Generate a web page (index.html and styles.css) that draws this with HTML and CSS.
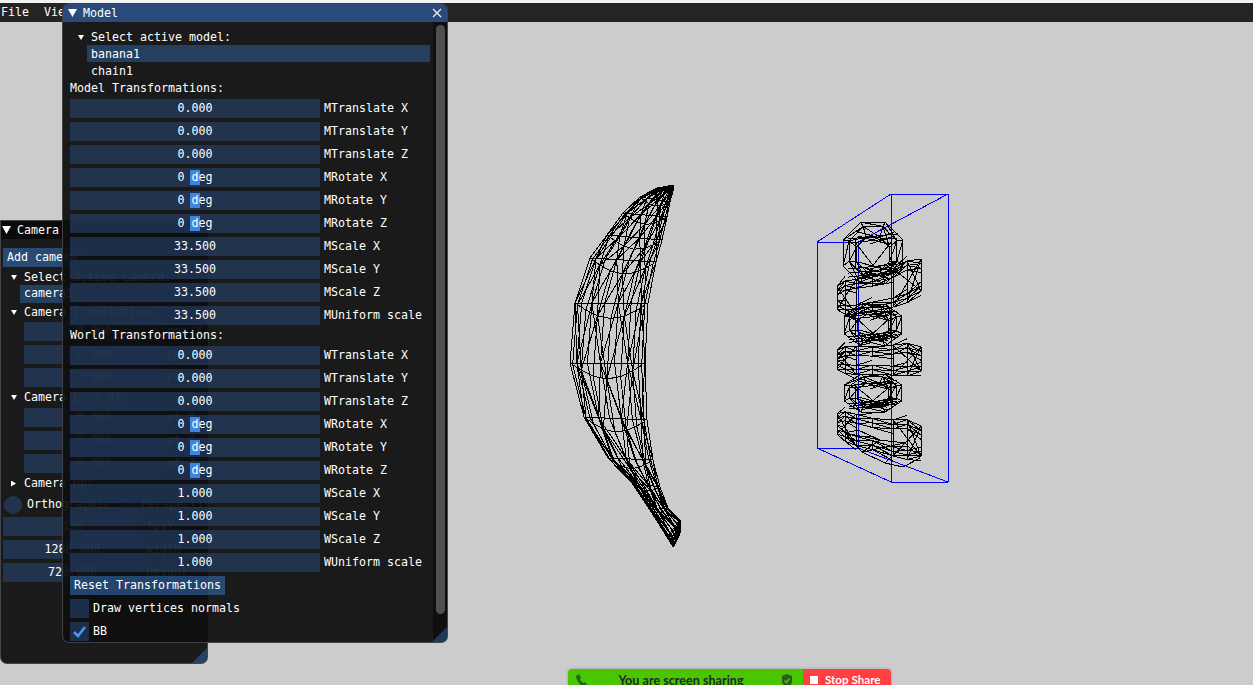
FILE: index.html
```html
<!DOCTYPE html>
<html lang="en">
<head>
<meta charset="utf-8">
<title>Mesh Viewer</title>
<link rel="stylesheet" href="styles.css">
</head>
<body>
<div class="top-strip"></div>
<nav class="menubar"><span>File</span><span>View</span></nav>

<svg class="canvas" viewBox="0 0 1253 685" width="1253" height="685" aria-hidden="true">
  <path class="bbox" d="M817 242L891 194H948L858 242H817V448L891 482H948L858 448H817M858 242V448M891 194V482M948 194V482"/>
  <path id="mesh-banana" class="mesh"/>
  <path id="mesh-chain" class="mesh"/>
</svg>

<section class="window camera">
  <header class="titlebar inactive"><i class="tri big"></i><span>Camera</span></header>
  <div class="content cam-content">
    <div class="button add">Add camera</div>
    <div class="tree tree-tight"><i class="tri"></i><span>Select active camera:</span></div>
    <div class="selected cam-sel">camera1</div>
    <div class="tree tree-mid"><i class="tri"></i><span>Camera Translation:</span></div>
    <div class="row indent"><div class="slider"><span>0.000</span></div><label>pos X</label></div>
    <div class="row indent"><div class="slider"><span>0.000</span></div><label>pos Y</label></div>
    <div class="row indent"><div class="slider"><span>2.500</span></div><label>pos Z</label></div>
    <div class="tree"><i class="tri"></i><span>Camera Look At:</span></div>
    <div class="row indent"><div class="slider"><span>0.000</span></div><label>at X</label></div>
    <div class="row indent"><div class="slider"><span>0.000</span></div><label>at Y</label></div>
    <div class="row indent"><div class="slider"><span>0.000</span></div><label>at Z</label></div>
    <div class="tree"><i class="tri right"></i><span>Camera Up:</span></div>
    <div class="radios">
      <i class="radio"></i><span class="radio-label">Orthographic</span>
      <i class="radio second"></i><span class="radio-label">Perspective</span>
    </div>
    <div class="row wide"><div class="slider"><span>136</span></div><label>fovY</label></div>
    <div class="row wide"><div class="slider"><span>1280.000</span></div><label>width</label></div>
    <div class="row wide"><div class="slider"><span>720.000</span></div><label>height</label></div>
  </div>
  <div class="grip"></div>
</section>

<section class="window model">
  <header class="titlebar"><i class="tri big"></i><span>Model</span>
    <svg class="close" viewBox="0 0 10 10" width="10" height="10" aria-hidden="true"><path d="M1 1L9 9M9 1L1 9"/></svg>
  </header>
  <div class="body">
    <div class="content model-content">
      <div class="list">
        <div class="tree"><i class="tri"></i><span>Select active model:</span></div>
        <div class="selected">banana1</div>
        <div class="item">chain1</div>
      </div>
      <div class="text">Model Transformations:</div>
      <div class="row"><div class="slider"><span>0.000</span></div><label>MTranslate X</label></div>
      <div class="row"><div class="slider"><span>0.000</span></div><label>MTranslate Y</label></div>
      <div class="row"><div class="slider"><span>0.000</span></div><label>MTranslate Z</label></div>
      <div class="row"><div class="slider"><b class="grab"></b><span>0 deg</span></div><label>MRotate X</label></div>
      <div class="row"><div class="slider"><b class="grab"></b><span>0 deg</span></div><label>MRotate Y</label></div>
      <div class="row"><div class="slider"><b class="grab"></b><span>0 deg</span></div><label>MRotate Z</label></div>
      <div class="row"><div class="slider"><span>33.500</span></div><label>MScale X</label></div>
      <div class="row"><div class="slider"><span>33.500</span></div><label>MScale Y</label></div>
      <div class="row"><div class="slider"><span>33.500</span></div><label>MScale Z</label></div>
      <div class="row"><div class="slider"><span>33.500</span></div><label>MUniform scale</label></div>
      <div class="text">World Transformations:</div>
      <div class="row"><div class="slider"><span>0.000</span></div><label>WTranslate X</label></div>
      <div class="row"><div class="slider"><span>0.000</span></div><label>WTranslate Y</label></div>
      <div class="row"><div class="slider"><span>0.000</span></div><label>WTranslate Z</label></div>
      <div class="row"><div class="slider"><b class="grab"></b><span>0 deg</span></div><label>WRotate X</label></div>
      <div class="row"><div class="slider"><b class="grab"></b><span>0 deg</span></div><label>WRotate Y</label></div>
      <div class="row"><div class="slider"><b class="grab"></b><span>0 deg</span></div><label>WRotate Z</label></div>
      <div class="row"><div class="slider"><span>1.000</span></div><label>WScale X</label></div>
      <div class="row"><div class="slider"><span>1.000</span></div><label>WScale Y</label></div>
      <div class="row"><div class="slider"><span>1.000</span></div><label>WScale Z</label></div>
      <div class="row"><div class="slider"><span>1.000</span></div><label>WUniform scale</label></div>
      <div class="button reset">Reset Transformations</div>
      <div class="check"><i class="box"></i><span>Draw vertices normals</span></div>
      <div class="check"><i class="box"><svg viewBox="0 0 19 19" width="19" height="19" aria-hidden="true"><path d="M4 10L8 14L15 5"/></svg></i><span>BB</span></div>
    </div>
    <div class="scrollbar"><div class="scroll-grab"></div></div>
  </div>
  <div class="grip"></div>
</section>

<aside class="share">
  <div class="share-status">
    <svg class="share-phone" viewBox="0 0 12 12" width="12" height="12" aria-hidden="true"><path d="M1 2L4 0L6 4L5 5.500C6 7 7 8 8.500 9L10 8L13 12H7C4 10 1.500 6 1 2Z"/></svg>
    <span>You are screen sharing</span>
    <svg class="share-shield" viewBox="0 0 12 14" width="12" height="14" aria-hidden="true"><path class="sh" d="M6 0L11 2V7C11 10 9 12 6 14C3 12 1 10 1 7V2Z"/><path class="tick" d="M3.500 6.500L5.500 8.500L8.500 4.500"/></svg>
  </div>
  <div class="share-stop"><i class="stop-square"></i><span>Stop Share</span></div>
</aside>
<script src="script.js"></script>
</body>
</html>
```
FILE: styles.css
```css
* { box-sizing: border-box; }

html, body {
  margin: 0;
  width: 1253px;
  height: 685px;
  overflow: hidden;
}

body {
  position: relative;
  background: #ccc;
  color: #fff;
  font: 11.63px/13px "DejaVu Sans Mono", "Liberation Mono", monospace;
  white-space: nowrap;
}

.top-strip { height: 3px; background: #f2f2f2; }

.menubar {
  display: flex;
  gap: 15px;
  height: 19px;
  padding: 3px 1px;
  background: #242424;
}

.canvas { position: absolute; left: 0; top: 0; }
.mesh { fill: none; stroke: #000; stroke-width: 1; shape-rendering: crispEdges; }
.bbox { fill: none; stroke: #00f; stroke-width: 1; shape-rendering: crispEdges; }

.window {
  position: absolute;
  overflow: hidden;
  display: flex;
  flex-direction: column;
  background: rgba(15, 15, 15, .94);
  border: 1px solid rgba(110, 110, 128, .5);
  border-radius: 7px;
}

.model { left: 62px; top: 3px; width: 386px; height: 640px; }
.camera { left: 0; top: 220px; width: 208px; height: 444px; border-top-left-radius: 0; }

.titlebar {
  flex: none;
  display: flex;
  align-items: center;
  height: 18px;
  padding-left: 5px;
  background: #294a7a;
}
.titlebar.inactive { background: #0a0a0a; padding-left: 1px; }
.titlebar > span { margin-left: 6px; }

.close { margin-left: auto; margin-right: 5px; }
.close path { fill: none; stroke: #eee; stroke-width: 1.3; }

.tri {
  flex: none;
  width: 6px;
  height: 5px;
  background: #fff;
  clip-path: polygon(0 0, 100% 0, 50% 100%);
}
.tri.big { width: 9px; height: 8px; }
.tri.right { width: 5px; height: 6px; clip-path: polygon(0 0, 100% 50%, 0 100%); }

.body { flex: 1; display: flex; min-height: 0; }

.content { display: flex; flex-direction: column; min-width: 0; }

.model-content {
  flex: 1;
  gap: 4px;
  padding: 9px 3px 0 7px;
}

.list {
  display: flex;
  flex-direction: column;
  margin-bottom: -2px;
  padding-left: 17px;
}
.list .tree { margin: 0 0 1px -9px; gap: 7px; }
.selected {
  height: 17px;
  padding: 3px 4px 1px;
  background: rgba(66, 150, 250, .31);
}
.item { height: 17px; margin-top: 1px; padding: 2px 4px; }

.tree { display: flex; align-items: center; height: 13px; flex: none; }
.text { height: 13px; flex: none; }

.row { display: flex; gap: 4px; height: 19px; flex: none; align-items: center; }

.slider {
  position: relative;
  display: flex;
  align-items: center;
  justify-content: center;
  width: 250px;
  height: 19px;
  background: rgba(41, 74, 122, .54);
}
.slider span { position: relative; }

.grab {
  position: absolute;
  left: 120px;
  top: 2px;
  width: 10px;
  height: 15px;
  background: #3d85e0;
}

.button {
  flex: none;
  height: 19px;
  padding: 3px 4px;
  background: rgba(66, 150, 250, .4);
  align-self: flex-start;
}

.check { display: flex; align-items: center; gap: 4px; height: 19px; flex: none; }
.box { display: block; width: 19px; height: 19px; background: rgba(41, 74, 122, .54); }
.box svg { display: block; }
.box path { fill: none; stroke: #4296fa; stroke-width: 2.6; }

.scrollbar {
  flex: none;
  width: 14px;
  padding: 3px 2px 28px 3px;
  background: rgba(5, 5, 5, .53);
}
.scroll-grab { height: 100%; background: #4f4f4f; border-radius: 5px; }

.grip {
  position: absolute;
  right: 0;
  bottom: 0;
  width: 15px;
  height: 15px;
  background: rgba(66, 150, 250, .32);
  clip-path: polygon(100% 0, 100% 100%, 0 100%);
}

.cam-content { flex: 1; padding: 9px 3px 0 2px; overflow: hidden; }
.cam-content .add { margin-bottom: 4px; }
.cam-content .tree { margin-left: 8px; gap: 7px; margin-bottom: 4px; }
.cam-content .tree-tight { margin-bottom: 1px; }
.cam-content .tree-mid { margin-bottom: 3px; }
.cam-content .tree .tri.right { margin-right: 1px; }
.cam-sel { height: 18px; margin-left: 17px; padding: 2px 4px; flex: none; margin-bottom: 3px; }

.indent { margin-left: 21px; margin-bottom: 4px; }
.indent .slider { width: 140px; }
.indent label { margin-left: -1px; }

.wide { margin-bottom: 4px; }
.wide .slider { width: 139px; }

.radios { display: flex; align-items: center; height: 19px; flex: none; margin: 1px 0 3px 1px; }
.radio { flex: none; width: 18px; height: 18px; border-radius: 50%; background: rgba(41, 74, 122, .54); }
.radio.second { margin-left: 7px; }
.radio-label { margin-left: 5px; }

.share {
  position: absolute;
  left: 568px;
  top: 669px;
  display: flex;
  width: 323px;
  height: 20px;
  border-radius: 4px 4px 0 0;
  overflow: hidden;
  box-shadow: 0 0 3px rgba(0, 0, 0, .25);
  font: 700 11.6px/20px Lato, "Open Sans", sans-serif;
}
.share-status {
  position: relative;
  display: flex;
  justify-content: center;
  width: 235px;
  padding: 2px 9px 0 0;
  background: #4ac600;
  color: #23263a;
  font-size: 12.6px;
}
.share-stop {
  display: flex;
  align-items: flex-start;
  gap: 7px;
  flex: 1;
  padding: 1px 0 0 7px;
  background: #ff4040;
}
.stop-square { width: 8px; height: 8px; margin-top: 6px; background: #fff; }

.share-phone { position: absolute; left: 7px; top: 5px; }
.share-phone path { fill: #1f6a12; }
.share-shield { position: absolute; right: 10px; top: 5px; }
.sh { fill: #2c5c22; }
.tick { fill: none; stroke: #4ac600; stroke-width: 1.5; }
```
FILE: script.js
```js
function seg(a, b) {
  return "M" + a[0].toFixed(1) + " " + a[1].toFixed(1) + "L" + b[0].toFixed(1) + " " + b[1].toFixed(1);
}
function loop(pts) {
  var d = "";
  for (var i = 0; i < pts.length; i++) d += seg(pts[i], pts[(i + 1) % pts.length]);
  return d;
}
function lerp(a, b, t) { return a + (b - a) * t; }

function banana() {
  var S = [
    [674,185,674,185],[657,188,673,191],[640,197,670,202],[623,213,667,217],
    [607,235,662,240],[590,258,656,262],[575,303,648,303],[570,363,645,363],
    [584,417,647,420],[608,458,653,460],[632,483,660,487],[650,510,668,508],
    [667,537,680,520],[673,547,680,533]
  ];
  var n = 7, d = "";
  function pt(j, i, side) {
    var u = (i + (side ? 0.45 : 0)) / n;
    var t = 0.45 * u + 0.55 * (0.5 - 0.5 * Math.cos(Math.PI * u));
    var s = S[j], w = (s[2] - s[0]) / 75;
    return [lerp(s[0], s[2], t), lerp(s[1], s[3], t) + (side ? 16 * w * Math.sin(Math.PI * t) : 0)];
  }
  [0, 1].forEach(function (side) {
    var lim = side ? n - 1 : n;
    for (var j = 0; j < S.length; j++) {
      for (var i = 0; i < lim; i++) {
        d += seg(pt(j, i, side), pt(j, i + 1, side));
        if (j + 1 < S.length) {
          d += seg(pt(j, i, side), pt(j + 1, i, side));
          d += (i + j) % 2
            ? seg(pt(j, i + 1, side), pt(j + 1, i, side))
            : seg(pt(j, i, side), pt(j + 1, i + 1, side));
        }
      }
      if (j + 1 < S.length) d += seg(pt(j, lim, side), pt(j + 1, lim, side));
    }
  });
  return d;
}

// A link seen side on: a block at each end, joined by two dense bands.
function wideLink(yl, yr, hl, hr, sag) {
  var xs = [837, 845, 856, 872, 893, 907, 921];
  var prof = [0.72, 1, 1, 0.92, 0.96, 1, 0.72];
  var d = "";
  function cy(k) { return lerp(yl, yr, (xs[k] - 837) / 84) + sag * Math.sin(Math.PI * (xs[k] - 837) / 84); }
  function hh(k) { return lerp(hl, hr, (xs[k] - 837) / 84) * prof[k]; }
  function p(k, off) { return [xs[k], cy(k) + off]; }
  for (var k = 0; k < xs.length; k++) {
    var h = hh(k);
    if (k + 1 < xs.length) {
      var g = hh(k + 1);
      [[-1, 0], [-1, 4.5], [-1, 9], [1, 0], [1, -4.5], [1, -9]].forEach(function (r) {
        d += seg(p(k, r[0] * h + r[1]), p(k + 1, r[0] * g + r[1]));
        d += seg(p(k, r[0] * h + r[1]), p(k + 1, r[0] * g + r[1] + (k % 2 ? 4.5 : -4.5)));
      });
    }
    d += seg(p(k, -h), p(k, -h + 9)) + seg(p(k, h), p(k, h - 9));
    if (k < 3 || k > 3) d += seg(p(k, -h), p(k, h));
  }
  // crosses on the two end blocks
  d += seg(p(0, -hh(0)), p(2, hh(2))) + seg(p(0, hh(0)), p(2, -hh(2)));
  d += seg(p(4, -hh(4)), p(6, hh(6))) + seg(p(4, hh(4)), p(6, -hh(6)));
  d += seg(p(5, -hh(5)), p(6, hh(6))) + seg(p(5, hh(5)), p(6, -hh(6)));
  return d;
}

// A link seen end on: nested low-poly rings with dense bands top and bottom.
function narrowLink(cx, cy, w, h) {
  var d = "", rings = [];
  [[1, 0], [0.8, -0.06], [0.55, 0.04]].forEach(function (r) {
    var pts = [];
    for (var i = 0; i < 8; i++) {
      var a = Math.PI * (i + 0.5) / 4;
      pts.push([cx + w * r[0] * Math.cos(a) * 1.08, cy + h * (r[0] * Math.sin(a) * 1.08 + r[1])]);
    }
    rings.push(pts);
    d += loop(pts);
  });
  for (var i = 0; i < 8; i++) {
    d += seg(rings[0][i], rings[1][i]) + seg(rings[1][i], rings[2][i]);
    d += seg(rings[0][i], rings[1][(i + 1) % 8]) + seg(rings[1][i], rings[2][(i + 1) % 8]);
  }
  [-0.55, -0.42, 0.42, 0.55, 0.68].forEach(function (f, idx) {
    var y = cy + f * h;
    d += seg([cx - w * 0.82, y + 3], [cx + w * 0.82, y - 2]);
    d += seg([cx - w * 0.5, y - 4], [cx + w * 0.5, y + 4]);
    d += seg([cx - w * 0.1 * idx, y + 4], [cx + w * 0.7, y - 4]);
  });
  d += seg([cx - w * 0.6, cy - h * 0.5], [cx - w * 0.6, cy + h * 0.5]);
  d += seg([cx + w * 0.6, cy - h * 0.5], [cx + w * 0.6, cy + h * 0.5]);
  d += seg([cx - w * 0.6, cy - h * 0.35], [cx, cy + h * 0.4]) + seg([cx + w * 0.6, cy - h * 0.35], [cx, cy + h * 0.4]);
  return d;
}

function chain() {
  return [
    narrowLink(873, 253, 30, 31),
    wideLink(298, 275, 16, 22, 6),
    narrowLink(873, 325, 29, 21),
    wideLink(360, 359, 13, 17, 1),
    narrowLink(873, 393, 29, 19),
    wideLink(424, 441, 14, 21, 3),
    loop([[845, 433], [862, 452], [885, 463], [903, 467], [920, 458], [905, 443], [880, 440], [858, 430]]),
    seg([862, 452], [880, 440]) + seg([885, 463], [905, 443]) + seg([862, 452], [905, 443]) + seg([845, 433], [880, 440])
  ].join("");
}

document.getElementById("mesh-banana").setAttribute("d", banana());
document.getElementById("mesh-chain").setAttribute("d", chain());
```
